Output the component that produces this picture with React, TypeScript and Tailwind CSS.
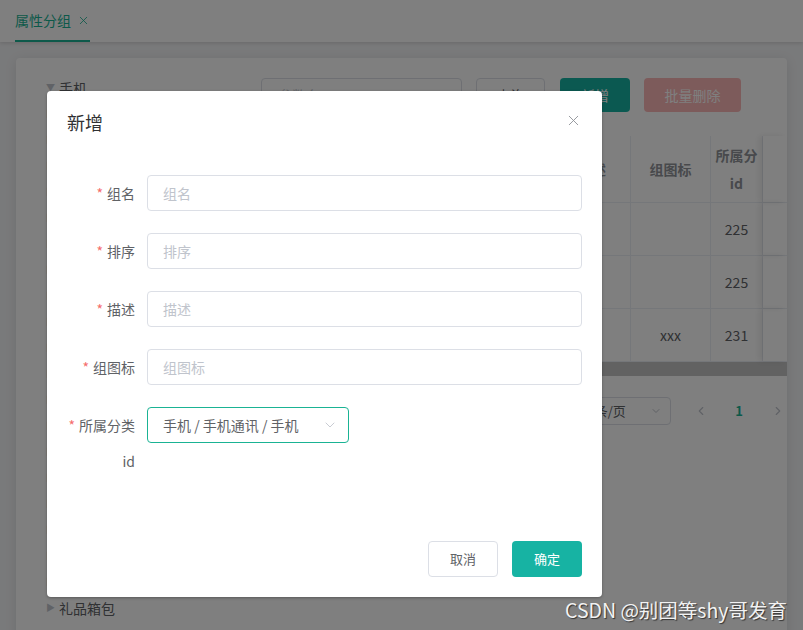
import React from 'react';
import { X, ChevronDown, ChevronLeft, ChevronRight } from 'lucide-react';

const FONT = { fontFamily: '"Noto Sans CJK SC", "Liberation Sans", sans-serif' };

// rows between 手机 and 礼品箱包 sit under the dialog, only their arrows peek out
const hiddenRows = 19;

const rows = [
  { icon: '', cat: '225' },
  { icon: '', cat: '225' },
  { icon: 'xxx', cat: '231' },
];

const FormRow = ({ label, placeholder }: { label: string; placeholder: string }) => (
  <div className="flex mb-[22px]">
    <label className="w-[80px] pr-3 text-right text-sm text-[#606266] leading-[36px] shrink-0">
      <span className="text-[#f56c6c] mr-1">*</span>
      {label}
    </label>
    <div className="flex-1 h-9 border border-[#dcdfe6] rounded flex items-center px-[15px] text-sm text-[#c0c4cc]">
      {placeholder}
    </div>
  </div>
);

const TreeRow = ({ name, open }: { name?: string; open?: boolean }) => (
  <div className="h-[26px] flex items-center text-sm text-[#606266]">
    <span className="w-3 text-[9px] text-[#c0c4cc]">{open ? '▼' : '▶'}</span>
    {name && <span className="ml-[1px]">{name}</span>}
  </div>
);

export default function App() {
  return (
    <div className="relative w-[803px] h-[630px] overflow-hidden bg-[#f3f4f6]" style={FONT}>
      {/* page underneath */}
      <div className="h-[42px] bg-white shadow-[0_1px_4px_rgba(0,0,0,0.15)] flex items-end pl-[15px]">
        <div className="h-[42px] flex items-center gap-[6px] border-b-2 border-[#1ab394] text-sm text-[#1ab394]">
          <span>属性分组</span>
          <X size={13} strokeWidth={1.5} />
        </div>
      </div>
      <div className="px-4 pt-4">
        <div className="bg-white rounded h-[600px] shadow-[0_2px_12px_rgba(0,0,0,0.1)] flex">
          <div className="w-[245px] pl-[30px] pt-[17px] shrink-0">
            <TreeRow name="手机" open />
            {Array.from({ length: hiddenRows }).map((_, i) => (
              <TreeRow key={i} />
            ))}
            <TreeRow name="礼品箱包" />
          </div>
          <div className="flex-1 pt-5">
            <div className="flex items-center h-[34px]">
              <div className="w-[201px] h-[34px] border border-[#dcdfe6] rounded px-4 flex items-center text-sm text-[#c0c4cc]">参数名</div>
              <div className="ml-[14px] w-[69px] h-[34px] border border-[#dcdfe6] rounded flex items-center justify-center text-sm text-[#606266]">查询</div>
              <div className="ml-[15px] w-[70px] h-[34px] rounded bg-[#17b3a3] flex items-center justify-center text-sm text-white">新增</div>
              <div className="ml-[14px] w-[97px] h-[34px] rounded bg-[#fab6b6] flex items-center justify-center text-sm text-white">批量删除</div>
            </div>
            <div className="mt-6 relative">
              <div className="flex h-[67px] border-b border-[#ebeef5] text-sm font-bold text-[#909399]">
                <div className="w-[370px] border-r border-[#ebeef5] flex items-center justify-end pr-6">组描述</div>
                <div className="w-[80px] border-r border-[#ebeef5] flex items-center justify-center">组图标</div>
                <div className="w-[52px] border-r border-[#ebeef5] flex flex-col items-center justify-center leading-[28px] overflow-hidden whitespace-nowrap">
                  <span>所属分</span>
                  <span>id</span>
                </div>
                <div className="flex-1 shadow-[-4px_0_6px_rgba(0,0,0,0.08)]"></div>
              </div>
              {rows.map((r, i) => (
                <div key={i} className="flex h-[53px] border-b border-[#ebeef5] text-sm text-[#606266]">
                  <div className="w-[370px] border-r border-[#ebeef5]"></div>
                  <div className="w-[80px] border-r border-[#ebeef5] flex items-center justify-center">{r.icon}</div>
                  <div className="w-[52px] border-r border-[#ebeef5] flex items-center justify-center">{r.cat}</div>
                  <div className="flex-1 shadow-[-4px_0_6px_rgba(0,0,0,0.08)]"></div>
                </div>
              ))}
              <div className="h-[14px] bg-[#c4c4c4]"></div>
              <div className="mt-[21px] flex items-center justify-end h-[28px] text-[13px] text-[#606266]">
                <div className="w-[100px] h-[28px] border border-[#dcdfe6] rounded flex items-center justify-between px-2">
                  <span>10条/页</span>
                  <ChevronDown size={12} className="text-[#c0c4cc]" />
                </div>
                <ChevronLeft size={14} className="ml-[23px] text-[#c0c4cc]" />
                <span className="ml-[27px] font-bold text-[#1ab394]">1</span>
                <ChevronRight size={14} className="ml-[28px] mr-[2px] text-[#c0c4cc]" />
              </div>
            </div>
          </div>
        </div>
      </div>

      {/* overlay */}
      <div className="absolute inset-0 bg-black/50"></div>

      {/* dialog */}
      <div className="absolute left-[47px] top-[91px] w-[555px] h-[506px] bg-white rounded-sm shadow-[0_1px_3px_rgba(0,0,0,0.3)] flex flex-col">
        <div className="flex items-center justify-between px-5 pt-[19px] pb-[10px]">
          <span className="text-lg leading-6 text-[#303133]">新增</span>
          <X size={17} strokeWidth={1.3} className="text-[#909399] -mt-1" />
        </div>
        <div className="px-5 pt-[31px] flex-1">
          <FormRow label="组名" placeholder="组名" />
          <FormRow label="排序" placeholder="排序" />
          <FormRow label="描述" placeholder="描述" />
          <FormRow label="组图标" placeholder="组图标" />
          <div className="flex">
            <label className="w-[80px] pr-3 text-right text-sm text-[#606266] leading-[36px] shrink-0">
              <span className="text-[#f56c6c] mr-1">*</span>
              所属分类id
            </label>
            <div className="w-[202px] h-9 border border-[#1ab394] rounded flex items-center justify-between pl-[15px] pr-[10px] text-sm text-[#606266]">
              <span>手机 / 手机通讯 / 手机</span>
              <ChevronDown size={16} strokeWidth={1.3} className="text-[#c0c4cc]" />
            </div>
          </div>
        </div>
        <div className="flex justify-end gap-[14px] px-5 pb-5">
          <div className="w-[70px] h-9 border border-[#dcdfe6] rounded flex items-center justify-center text-[13px] text-[#606266]">取消</div>
          <div className="w-[70px] h-9 bg-[#17b3a3] rounded flex items-center justify-center text-[13px] text-white">确定</div>
        </div>
      </div>

      {/* watermark */}
      <div className="absolute right-[16px] bottom-[6px] text-[19.5px] text-[#f2f2f2] [text-shadow:1px_1px_1px_rgba(0,0,0,0.6)]">
        CSDN @别团等shy哥发育
      </div>
    </div>
  );
}
